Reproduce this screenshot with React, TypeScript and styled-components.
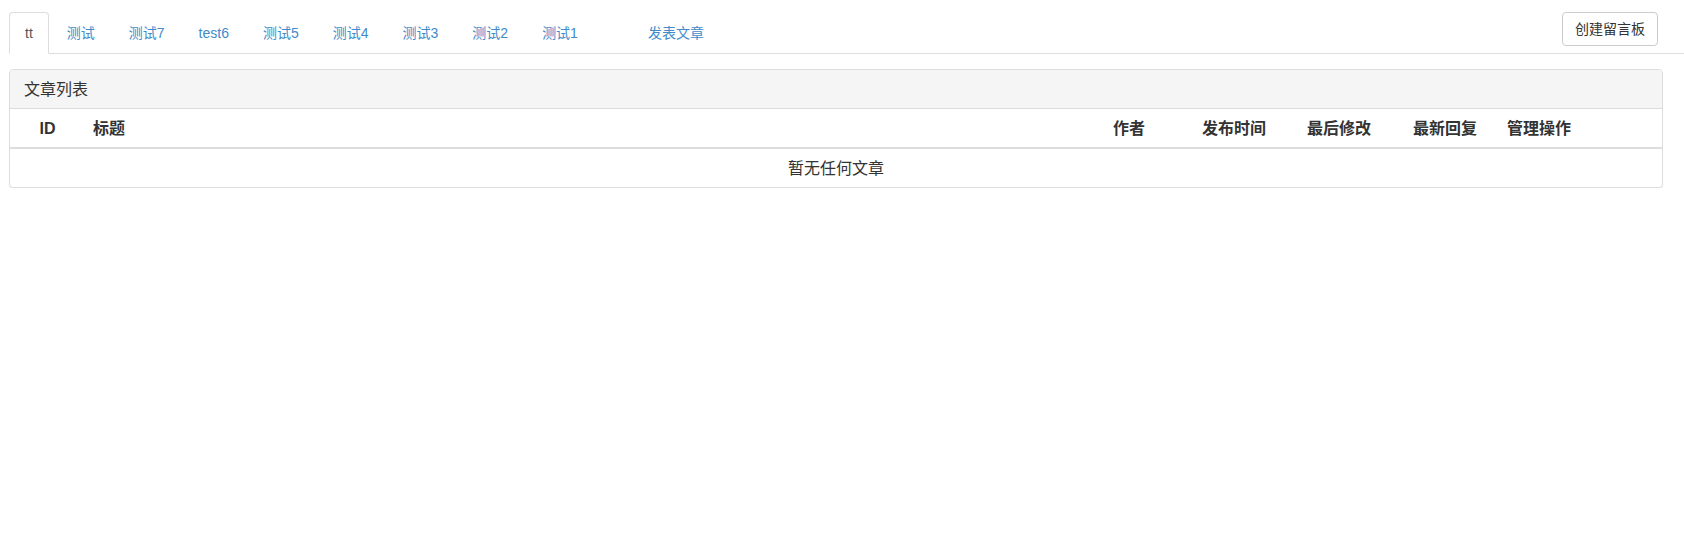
import React from "react";
import styled, { createGlobalStyle } from "styled-components";

const GlobalStyle = createGlobalStyle`
  html, body { margin: 0; padding: 0; background: #fff; }
  body {
    font-family: "Liberation Sans", Arial, "Noto Sans CJK SC", sans-serif;
    font-size: 14px;
    line-height: 20px;
    color: #333;
  }
  * { box-sizing: border-box; }
`;

const Page = styled.div`
  padding: 12px 0 0 9px;
`;

const NavBar = styled.div`
  display: flex;
  align-items: flex-start;
  border-bottom: 1px solid #ddd;
`;

const Tabs = styled.ul`
  display: flex;
  list-style: none;
  margin: 0 0 -1px 0;
  padding: 0;
  flex: 1;
`;

const TabItem = styled.li<{ $gap?: number }>`
  margin-right: 2px;
  margin-left: ${(p) => p.$gap ?? 0}px;
`;

const TabLink = styled.a<{ $active?: boolean }>`
  display: block;
  padding: 10px 15px;
  line-height: 20px;
  font-size: 14px;
  text-decoration: none;
  border: 1px solid ${(p) => (p.$active ? "#ddd" : "transparent")};
  border-bottom-color: transparent;
  border-radius: 4px 4px 0 0;
  background: ${(p) => (p.$active ? "#fff" : "transparent")};
  color: ${(p) => (p.$active ? "#555" : "#428bca")};
  cursor: pointer;
`;

const Button = styled.button`
  margin-right: 26px;
  padding: 6px 12px;
  font-family: inherit;
  font-size: 14px;
  line-height: 20px;
  color: #333;
  background: #fff;
  border: 1px solid #ccc;
  border-radius: 4px;
  cursor: pointer;
`;

const Panel = styled.div`
  margin: 15px 21px 0 0;
  border: 1px solid #ddd;
  border-radius: 4px;
  background: #fff;
  box-shadow: 0 1px 1px rgba(0, 0, 0, 0.05);
  overflow: hidden;
  font-size: 16px;
`;

const PanelHeading = styled.div`
  padding: 10px 14px 8px;
  background: #f5f5f5;
  border-bottom: 1px solid #ddd;
  color: #333;
  line-height: 20px;
`;

const Table = styled.table`
  width: 100%;
  border-collapse: collapse;
  table-layout: fixed;
  font-size: 16px;
`;

const Th = styled.th<{ $center?: boolean }>`
  padding: 10px 8px 8px;
  text-align: ${(p) => (p.$center ? "center" : "left")};
  font-weight: bold;
  color: #333;
  line-height: 20px;
  border-bottom: 2px solid #ddd;
`;

const Td = styled.td`
  padding: 10px 8px 8px;
  text-align: center;
  line-height: 20px;
  color: #333;
`;

const tabs = ["tt", "测试", "测试7", "test6", "测试5", "测试4", "测试3", "测试2", "测试1"];

export default function App() {
  return (
    <>
      <GlobalStyle />
      <Page>
        <NavBar>
          <Tabs>
            {tabs.map((t, i) => (
              <TabItem key={t}>
                <TabLink $active={i === 0}>{t}</TabLink>
              </TabItem>
            ))}
            <TabItem $gap={36}>
              <TabLink>发表文章</TabLink>
            </TabItem>
          </Tabs>
          <Button>创建留言板</Button>
        </NavBar>
        <Panel>
          <PanelHeading>文章列表</PanelHeading>
          <Table>
            <colgroup>
              <col style={{ width: 75 }} />
              <col />
              <col style={{ width: 89 }} />
              <col style={{ width: 105 }} />
              <col style={{ width: 106 }} />
              <col style={{ width: 94 }} />
              <col style={{ width: 163 }} />
            </colgroup>
            <thead>
              <tr>
                <Th $center>ID</Th>
                <Th>标题</Th>
                <Th>作者</Th>
                <Th>发布时间</Th>
                <Th>最后修改</Th>
                <Th>最新回复</Th>
                <Th>管理操作</Th>
              </tr>
            </thead>
            <tbody>
              <tr>
                <Td colSpan={7}>暂无任何文章</Td>
              </tr>
            </tbody>
          </Table>
        </Panel>
      </Page>
    </>
  );
}
